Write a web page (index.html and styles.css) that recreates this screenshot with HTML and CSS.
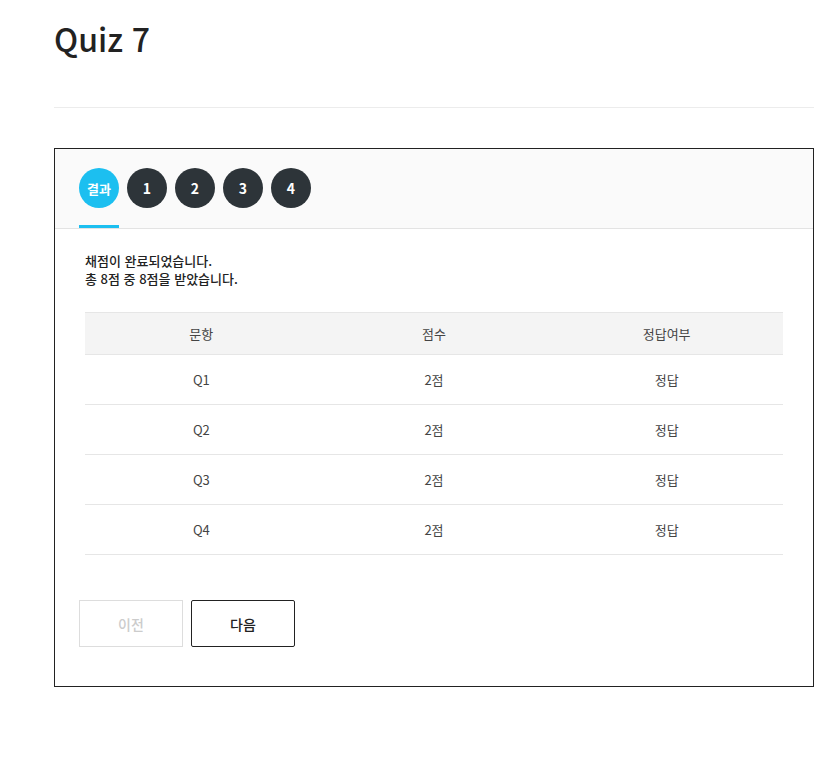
FILE: index.html
```html
<!DOCTYPE html>
<html lang="ko">
<head>
<meta charset="utf-8">
<title>Quiz 7</title>
<link rel="stylesheet" href="styles.css">
</head>
<body>
<div class="page">
  <h1 class="title">Quiz 7</h1>
  <div class="divider"></div>
  <section class="card">
    <nav class="tabs">
      <div class="tab active"><span class="dot">결과</span></div>
      <div class="tab"><span class="dot">1</span></div>
      <div class="tab"><span class="dot">2</span></div>
      <div class="tab"><span class="dot">3</span></div>
      <div class="tab"><span class="dot">4</span></div>
    </nav>
    <div class="body">
      <p class="summary">채점이 완료되었습니다.<br>총 8점 중 8점을 받았습니다.</p>
      <table class="result">
        <thead>
          <tr><th>문항</th><th>점수</th><th>정답여부</th></tr>
        </thead>
        <tbody>
          <tr><td>Q1</td><td>2점</td><td>정답</td></tr>
          <tr><td>Q2</td><td>2점</td><td>정답</td></tr>
          <tr><td>Q3</td><td>2점</td><td>정답</td></tr>
          <tr><td>Q4</td><td>2점</td><td>정답</td></tr>
        </tbody>
      </table>
    </div>
    <div class="footer">
      <button class="btn disabled" type="button">이전</button>
      <button class="btn" type="button">다음</button>
    </div>
  </section>
</div>
</body>
</html>
```
FILE: styles.css
```css
* { box-sizing: border-box; }
html, body { margin: 0; padding: 0; background: #fff; }
body {
  font-family: "Noto Sans CJK KR", "Noto Sans", sans-serif;
  color: #222;
}
.page {
  padding: 0 22px 0 54px;
}
.title {
  margin: 0;
  padding-top: 14px;
  font-size: 32px;
  line-height: 48px;
  font-weight: 500;
  color: #222;
}
.divider {
  margin-top: 45px;
  height: 1px;
  background: #ececec;
}
.card {
  margin-top: 40px;
  border: 1px solid #222;
}
.tabs {
  display: flex;
  gap: 8px;
  padding: 19px 24px 0;
  background: #fafafa;
  border-bottom: 1px solid #e3e3e3;
}
.tab {
  padding-bottom: 17px;
  border-bottom: 3px solid transparent;
}
.tab.active { border-bottom-color: #1cbff0; }
.dot {
  display: flex;
  align-items: center;
  justify-content: center;
  width: 40px;
  height: 40px;
  border-radius: 50%;
  background: #2d3439;
  color: #fff;
  font-size: 14px;
  font-weight: 700;
}
.tab.active .dot {
  background: #1cbff0;
  font-size: 13px;
}
.body {
  padding: 23px 30px 0;
}
.summary {
  margin: 0;
  font-size: 13px;
  line-height: 18px;
  font-weight: 500;
  color: #222;
}
.result {
  width: 100%;
  margin-top: 24px;
  border-collapse: collapse;
  table-layout: fixed;
  font-size: 13px;
  color: #444;
}
.result th {
  height: 42px;
  background: #f4f4f4;
  border-top: 1px solid #e6e6e6;
  border-bottom: 1px solid #e6e6e6;
  font-weight: 400;
  color: #444;
}
.result td {
  height: 50px;
  text-align: center;
  border-bottom: 1px solid #e6e6e6;
  font-weight: 400;
}
.footer {
  display: flex;
  gap: 8px;
  padding: 45px 24px 39px;
}
.btn {
  width: 104px;
  height: 47px;
  border: 1px solid #222;
  border-radius: 2px;
  background: #fff;
  font-family: inherit;
  font-size: 14px;
  font-weight: 500;
  color: #222;
}
.btn.disabled {
  border-color: #ddd;
  color: #ccc;
  border-radius: 0;
}
```
